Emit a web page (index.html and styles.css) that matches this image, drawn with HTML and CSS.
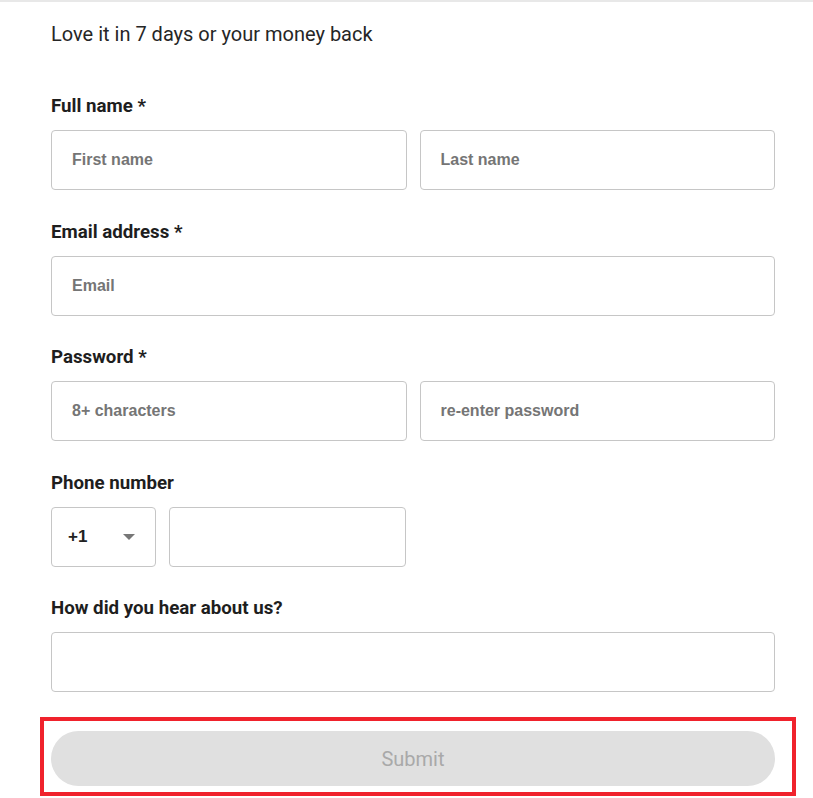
FILE: index.html
```html
<!DOCTYPE html>
<html lang="en">
<head>
<meta charset="utf-8">
<title>Sign up</title>
<link rel="stylesheet" href="styles.css">
</head>
<body>
<div class="topline"></div>
<main class="page">
  <p class="intro">Love it in 7 days or your money back</p>
  <form class="form">
    <div class="field">
      <label class="label">Full name *</label>
      <div class="row two">
        <div class="input"><span class="ph">First name</span></div>
        <div class="input"><span class="ph">Last name</span></div>
      </div>
    </div>
    <div class="field">
      <label class="label">Email address *</label>
      <div class="input"><span class="ph">Email</span></div>
    </div>
    <div class="field">
      <label class="label">Password *</label>
      <div class="row two">
        <div class="input"><span class="ph">8+ characters</span></div>
        <div class="input"><span class="ph">re-enter password</span></div>
      </div>
    </div>
    <div class="field">
      <label class="label">Phone number</label>
      <div class="row phone">
        <div class="input select"><span class="code">+1</span><span class="caret"></span></div>
        <div class="input"></div>
      </div>
    </div>
    <div class="field">
      <label class="label">How did you hear about us?</label>
      <div class="input"></div>
    </div>
    <div class="highlight">
      <div class="submit">Submit</div>
    </div>
  </form>
</main>
</body>
</html>
```

FILE: styles.css
```css
html, body {
  margin: 0;
  padding: 0;
  background: #ffffff;
}
body {
  font-family: Roboto, "Liberation Sans", Arial, sans-serif;
  color: #222222;
}
.topline {
  height: 2px;
  background: #e8e8e8;
}
.page {
  padding-left: 51px;
  width: 724px;
}
.intro {
  margin: 0;
  padding-top: 20px;
  font-size: 20px;
  line-height: 24px;
  color: #262626;
}
.form {
  margin-top: 47px;
  display: flex;
  flex-direction: column;
  gap: 28.5px;
}
.field {
  display: flex;
  flex-direction: column;
  gap: 13px;
}
.label {
  font-size: 18.7px;
  line-height: 24px;
  padding-top: 1px;
  margin-bottom: -1px;
  font-weight: 700;
  color: #1e1e1e;
}
.row {
  display: flex;
  gap: 13px;
}
.row.two > .input {
  flex: 1;
}
.row.phone .select {
  width: 105px;
  flex: none;
}
.row.phone .input:last-child {
  width: 237px;
  flex: none;
}
.input {
  box-sizing: border-box;
  height: 60px;
  border: 1px solid #c6c6c6;
  border-radius: 4px;
  display: flex;
  align-items: center;
  padding-left: 20px;
}
.ph {
  font-family: "Liberation Sans", Arial, sans-serif;
  font-weight: 700;
  font-size: 16px;
  color: #757575;
}
.select {
  padding-left: 16px;
  padding-right: 20px;
  justify-content: space-between;
}
.code {
  font-family: "Liberation Sans", Arial, sans-serif;
  font-weight: 700;
  font-size: 17px;
  color: #222222;
}
.caret {
  width: 0;
  height: 0;
  border-left: 6px solid transparent;
  border-right: 6px solid transparent;
  border-top: 6px solid #777777;
}
.highlight {
  margin-left: -11px;
  margin-top: -3.5px;
  width: 756px;
  box-sizing: border-box;
  border: 4px solid #f0222c;
  padding: 10px 17px 6px 7px;
}
.submit {
  height: 55px;
  border-radius: 28px;
  background: #e0e0e0;
  color: #a9a9a9;
  font-size: 20px;
  display: flex;
  align-items: center;
  justify-content: center;
}
```
